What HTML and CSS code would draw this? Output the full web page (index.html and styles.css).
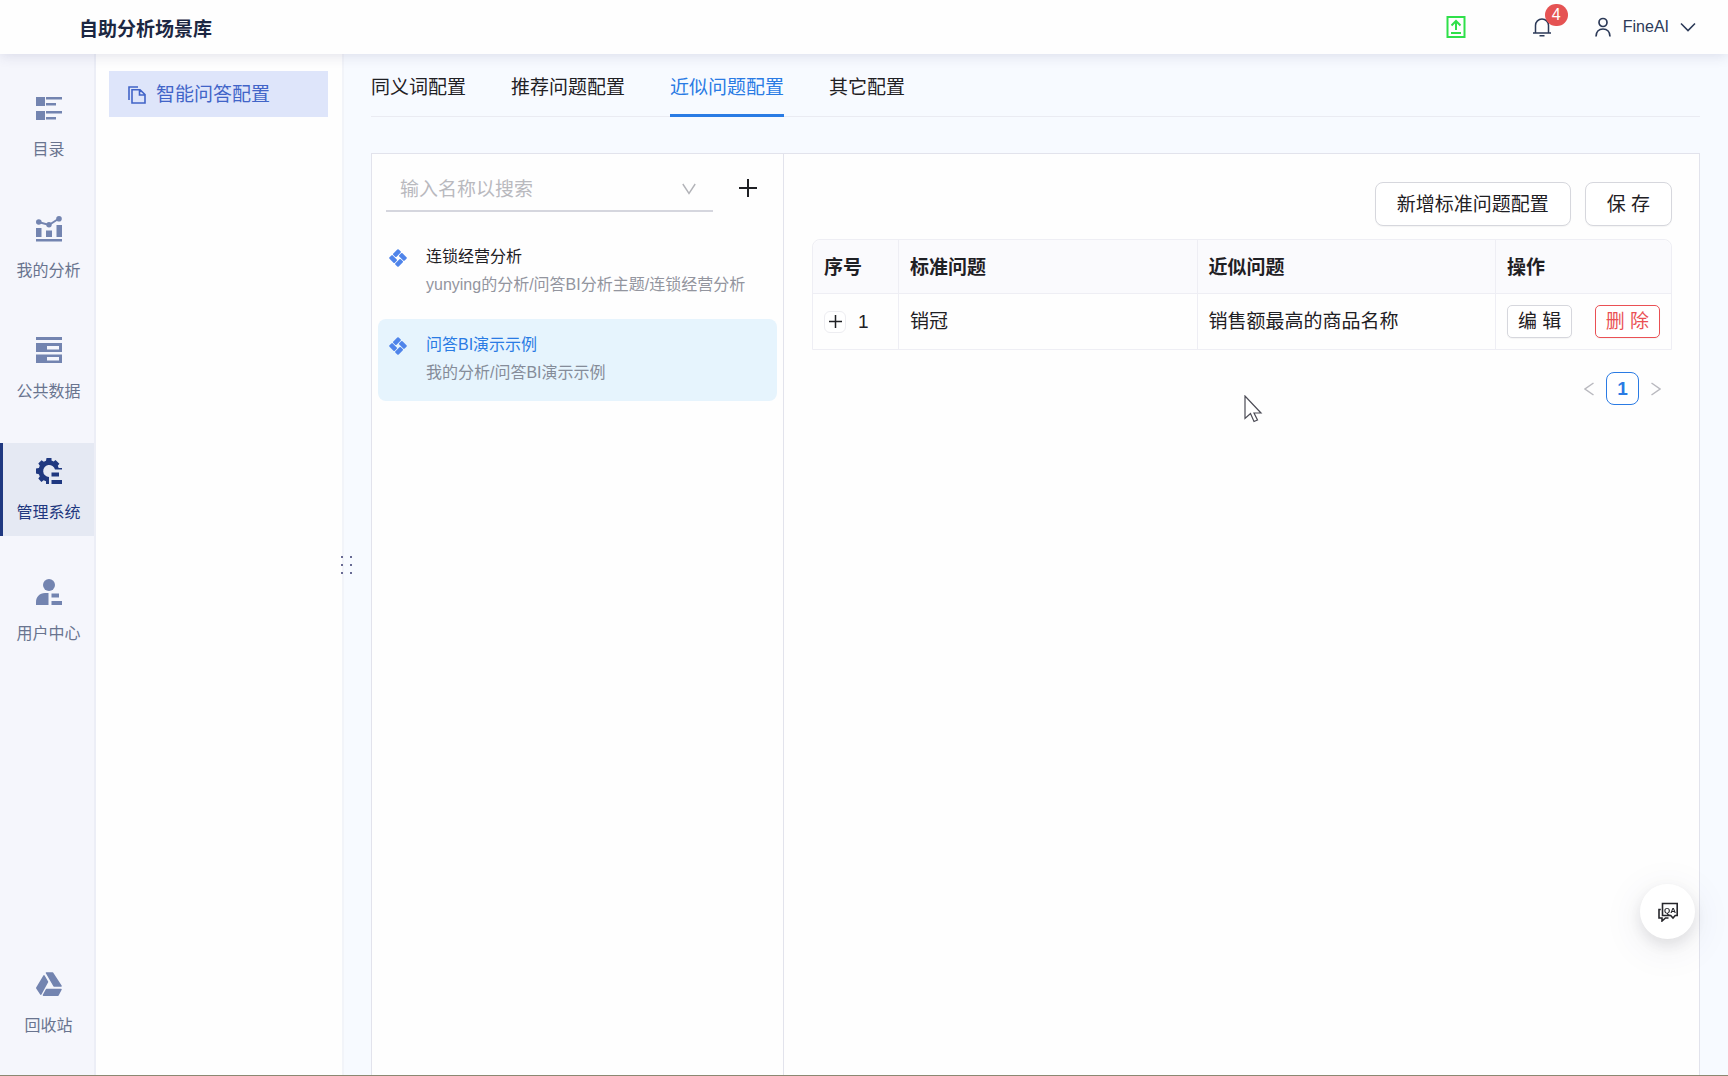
FILE: index.html
```html
<!DOCTYPE html>
<html lang="zh-CN">
<head>
<meta charset="utf-8">
<title>自助分析场景库</title>
<meta name="viewport" content="width=device-width, initial-scale=1">
<link rel="stylesheet" href="styles.css">
</head>
<body>
<svg class="sprite" aria-hidden="true">
  <symbol id="cube" viewBox="0 0 18 18">
    <g transform="rotate(45 9 9)" fill="currentColor">
      <rect x="2.500" y="2.500" width="4.600" height="7.600" rx="1"/>
      <rect x="7.900" y="2.500" width="7.600" height="4.600" rx="1"/>
      <rect x="10.900" y="7.900" width="4.600" height="7.600" rx="1"/>
      <rect x="2.500" y="10.900" width="7.600" height="4.600" rx="1"/>
    </g>
  </symbol>
</svg>

<header class="topbar">
  <h1 class="brand">自助分析场景库</h1>
  <div class="tools">
    <button class="icon-btn upload" aria-label="上传">
      <svg width="20" height="24" viewBox="0 0 20 24" fill="none" stroke="currentColor" stroke-width="2"><path d="M1.500 2h17v20h-17zM5 18h10M10 15V6.500M5.500 10.500L10 6l4.500 4.500"/></svg>
    </button>
    <button class="icon-btn bell" aria-label="通知">
      <svg width="20" height="20" viewBox="0 0 20 20" fill="none" stroke="currentColor" stroke-width="1.500"><path d="M1 16h18M3.500 16V8.500a6.500 6.500 0 0 1 13 0V16M7.500 18.800h5"/></svg>
      <span class="badge">4</span>
    </button>
    <button class="icon-btn account">
      <svg width="18" height="20" viewBox="0 0 18 20" fill="none" stroke="currentColor" stroke-width="1.700"><circle cx="9" cy="5.500" r="4"/><path d="M2 19.500c0-4.500 2.800-7.500 7-7.500s7 3 7 7.500"/></svg>
      <span>FineAI</span>
      <svg width="16" height="10" viewBox="0 0 16 10" fill="none" stroke="currentColor" stroke-width="1.600"><path d="M1 1.500l7 7 7-7"/></svg>
    </button>
  </div>
</header>

<div class="shell">
  <nav class="rail" aria-label="主导航">
    <a class="rail-item" href="#">
      <svg width="26" height="26" viewBox="0 0 26 26" fill="currentColor"><path d="M0 2h9v9H0zM10 2h16v2.500H10zM10 8h10v2.500H10zM0 16h9v9H0zM10 16h16v2.500H10zM10 22h10v2.500H10z"/></svg>
      <span>目录</span>
    </a>
    <a class="rail-item" href="#">
      <svg width="26" height="26" viewBox="0 0 26 26" fill="currentColor"><path d="M0 12h5.500v9H0zM10 14.500h6V21h-6zM20.500 9H26v12h-5.500zM0 23h26v2.500H0z"/><path d="M2.500 6l10.500 3L23 2.500" fill="none" stroke="currentColor" stroke-width="2"/><circle cx="2.800" cy="6" r="2.800"/><circle cx="13" cy="8.700" r="2.700"/><circle cx="23" cy="2.800" r="2.800"/></svg>
      <span>我的分析</span>
    </a>
    <a class="rail-item" href="#">
      <svg width="26" height="26" viewBox="0 0 26 26" fill="currentColor" fill-rule="evenodd"><path d="M0 0h26v3H0zM0 6h26v9H0zM11 9v3.500h12V9zM0 17.500h26v8.500H0zM11 20v3.500h12V20z"/></svg>
      <span>公共数据</span>
    </a>
    <a class="rail-item is-active" href="#" aria-current="page">
      <svg width="26" height="26" viewBox="0 0 26 26" fill="currentColor"><path d="M10.500 0h5v2.600l2.200.9 1.800-1.600 3.900 3.800-1.600 2 .9 2.200H26V11.500H19A6 6 0 1 0 13 19v7h-3v-2.800l-2.400-1-2.200 1.700-3.100-3.300 1.500-2.100-.9-2.300L0 15.500v-5l2.900-.6.9-2.200-1.500-2.300 3.200-3.200 2.300 1.500 2.200-.9zM15.500 14.500h7.500v4h-7.500zM15.500 22H26v4H15.500z"/></svg>
      <span>管理系统</span>
    </a>
    <a class="rail-item" href="#">
      <svg width="26" height="26" viewBox="0 0 26 26" fill="currentColor"><circle cx="13" cy="6" r="6"/><path d="M12.500 14v12H0v-3c0-5 3.500-9 9-9zM15.500 14.500h7.500v4h-7.500zM15.500 22H26v4H15.500z"/></svg>
      <span>用户中心</span>
    </a>
    <a class="rail-item rail-last" href="#">
      <svg width="26" height="26" viewBox="0 0 26 26" fill="currentColor" stroke="currentColor" stroke-linejoin="round" stroke-width="1.500"><path d="M10.500 2h6L25 15h-7zM8 4.800l3.500 6L4.800 23.200.8 17zM10.500 18.500h14.500L22 24.200H7.500z"/></svg>
      <span>回收站</span>
    </a>
  </nav>

  <aside class="submenu">
    <a class="submenu-item" href="#" aria-current="page">
      <svg width="18" height="18" viewBox="0 0 18 18" fill="none" stroke="currentColor" stroke-width="1.600"><path d="M1 14V1h9M4 3.800h8L17 8.500V17H4zM11.500 4v5H17"/></svg>
      <span>智能问答配置</span>
    </a>
    <div class="grip" aria-hidden="true"><i></i><i></i><i></i><i></i><i></i><i></i></div>
  </aside>

  <main class="content">
    <nav class="tabs" aria-label="配置">
      <a class="tab" href="#">同义词配置</a>
      <a class="tab" href="#">推荐问题配置</a>
      <a class="tab is-active" href="#" aria-current="page">近似问题配置</a>
      <a class="tab" href="#">其它配置</a>
    </nav>

    <section class="panel">
      <div class="themes">
        <div class="search-row">
          <label class="search">
            <input type="text" placeholder="输入名称以搜索" aria-label="输入名称以搜索">
            <svg width="14" height="12" viewBox="0 0 14 12" fill="none" stroke="currentColor" stroke-width="1.400"><path d="M.8 1L7 10.500 13.200 1"/></svg>
          </label>
          <button class="icon-btn add" aria-label="新增">
            <svg width="18" height="18" viewBox="0 0 18 18" stroke="currentColor" stroke-width="2"><path d="M9 0v18M0 9h18"/></svg>
          </button>
        </div>
        <a class="theme" href="#">
          <svg class="cube" width="18" height="18"><use href="#cube"/></svg>
          <span class="theme-text"><span class="theme-name">连锁经营分析</span><span class="theme-path">yunying的分析/问答BI分析主题/连锁经营分析</span></span>
        </a>
        <a class="theme is-active" href="#">
          <svg class="cube" width="18" height="18"><use href="#cube"/></svg>
          <span class="theme-text"><span class="theme-name">问答BI演示示例</span><span class="theme-path">我的分析/问答BI演示示例</span></span>
        </a>
      </div>

      <div class="questions">
        <div class="actions">
          <button class="btn">新增标准问题配置</button>
          <button class="btn">保 存</button>
        </div>
        <table class="grid">
          <colgroup><col class="col-no"><col><col><col class="col-ops"></colgroup>
          <thead><tr><th>序号</th><th>标准问题</th><th>近似问题</th><th>操作</th></tr></thead>
          <tbody><tr>
            <td><div class="no"><button class="expand" aria-label="展开"><svg width="13" height="13" viewBox="0 0 13 13" stroke="currentColor" stroke-width="1.500"><path d="M6.500 0v13M0 6.500h13"/></svg></button><span>1</span></div></td>
            <td>销冠</td>
            <td>销售额最高的商品名称</td>
            <td><div class="ops"><button class="btn btn-sm">编 辑</button><button class="btn btn-sm btn-danger">删 除</button></div></td>
          </tr></tbody>
        </table>
        <div class="pager">
          <button class="icon-btn arrow" aria-label="上一页"><svg width="10" height="14" viewBox="0 0 10 14" fill="none" stroke="currentColor" stroke-width="1.500"><path d="M9.500 1L1 7l8.500 6"/></svg></button>
          <button class="page" aria-current="page">1</button>
          <button class="icon-btn arrow" aria-label="下一页"><svg width="10" height="14" viewBox="0 0 10 14" fill="none" stroke="currentColor" stroke-width="1.500"><path d="M.5 1L9 7 .5 13"/></svg></button>
        </div>
      </div>
    </section>
  </main>
</div>

<button class="fab" aria-label="问答">
  <svg width="20" height="20" viewBox="0 0 20 20" fill="none" stroke="currentColor" stroke-width="1.600"><path d="M4.500 1.500h14.700v12h-2L15 16l-2.300-2.500H4.500zM2.800 7.500H1V16h3v3l3.500-3h3"/><text class="fab-text" x="12" y="10.500">QA</text></svg>
</button>
<svg class="cursor" width="20" height="28" viewBox="0 0 20 28" aria-hidden="true"><path d="M1 1v22.500l5.500-5 3.500 8 3.500-1.500-3.500-7H17z" fill="#fff" stroke="#4b4b55" stroke-width="1.200"/></svg>
</body>
</html>
```

FILE: styles.css
```css
* { box-sizing: border-box; }

body {
  margin: 0;
  min-height: 100vh;
  display: flex;
  flex-direction: column;
  background: #f7faff;
  border-bottom: 1px solid #8b8872;
  color: #1f2024;
  font: 19px/28px "Liberation Sans", "Noto Sans CJK SC", sans-serif;
}

a { color: inherit; text-decoration: none; }
button, input { font: inherit; color: inherit; }
svg { display: block; flex: none; }
.sprite { position: absolute; width: 0; height: 0; }

.icon-btn {
  display: flex;
  align-items: center;
  padding: 0;
  border: 0;
  background: none;
}

/* Top bar */
.topbar {
  position: relative;
  z-index: 2;
  display: flex;
  align-items: center;
  justify-content: space-between;
  height: 54px;
  padding: 0 32px 0 79px;
  background: #fefefe;
  box-shadow: 0 2px 12px rgba(60, 60, 110, .14);
}
.brand { margin: 0; padding-top: 5px; font-size: 19px; line-height: 28px; font-weight: 700; color: #1c2742; }
.tools { display: flex; align-items: center; color: #2c3a58; }
.upload { color: #2fe04a; }
.bell { position: relative; margin: 0 42px 0 66px; }
.badge {
  position: absolute;
  left: 13px;
  top: -13px;
  width: 23px;
  height: 22px;
  border-radius: 11px;
  background: #e55353;
  color: #fff;
  font-size: 16px;
  line-height: 22px;
  text-align: center;
}
.account { gap: 11px; font-size: 16px; }

/* Frame */
.shell { flex: 1; display: flex; align-items: stretch; }

.rail {
  display: flex;
  flex-direction: column;
  gap: 28px;
  width: 96px;
  padding: 26px 0;
  background: #f5f6fc;
  border-right: 2px solid #eceef6;
}
.rail-item {
  display: flex;
  flex-direction: column;
  align-items: center;
  gap: 17px;
  height: 93px;
  padding-top: 15px;
  border-left: 3px solid transparent;
  color: #7384b0;
  font-size: 16px;
}
.rail-item span { line-height: 24px; white-space: nowrap; color: #69748f; }
.rail-item.is-active { background: #e5e9f3; border-left-color: #1f3880; color: #1f3880; }
.rail-item.is-active span { color: #1f3880; }
.rail-last { margin-top: auto; }

.submenu {
  position: relative;
  width: 248px;
  padding: 17px 14px 0 13px;
  background: #fefefe;
  border-right: 2px solid #f2f4f9;
}
.submenu-item {
  display: flex;
  align-items: center;
  gap: 10px;
  height: 46px;
  padding: 1px 0 0 19px;
  background: #dee5fa;
  color: #4164c8;
}
.grip {
  position: absolute;
  right: -10px;
  top: 50%;
  transform: translateY(-50%);
  display: grid;
  grid-template-columns: 2px 2px;
  gap: 6px 7px;
}
.grip i { width: 2px; height: 2px; background: #686a94; }

.content {
  flex: 1;
  min-width: 0;
  display: flex;
  flex-direction: column;
  padding: 0 28px 0 27px;
}

/* Tabs */
.tabs {
  display: flex;
  gap: 45px;
  height: 63px;
  margin-bottom: 36px;
  padding-top: 20px;
  box-shadow: inset 0 -1px #eaebf2;
}
.tab { border-bottom: 3px solid transparent; white-space: nowrap; }
.tab.is-active { color: #2a7be4; border-bottom-color: #2a7be4; }

/* Panel */
.panel {
  flex: 1;
  display: flex;
  background: #fefefe;
  border: 1px solid #e2e3ec;
  border-bottom: 0;
}
.themes { width: 412px; padding: 10px 6px; border-right: 1px solid #e2e3ec; }
.search-row { display: flex; align-items: center; gap: 26px; margin: 0 20px 19px 8px; }
.search {
  flex: 1;
  display: flex;
  align-items: center;
  height: 48px;
  padding: 3px 17px 0 14px;
  border-bottom: 2px solid #d5d6de;
  color: #b2b3b8;
}
.search input { flex: 1; min-width: 0; padding: 3px 0 0; border: 0; outline: 0; background: none; }
.search input::placeholder { color: #b9b9be; opacity: 1; }

.theme {
  display: flex;
  gap: 19px;
  height: 82px;
  margin-bottom: 6px;
  padding: 12px 0 0 11px;
  border-radius: 8px;
  font-size: 16px;
}
.cube { margin-top: 6px; color: #4f84ea; }
.theme-text { display: flex; flex-direction: column; white-space: nowrap; }
.theme-path { color: #93959e; }
.theme.is-active { background: #e6f4fd; }
.theme.is-active .theme-name { color: #2a7be4; }
.theme.is-active .theme-path { color: #858c99; }

.questions { flex: 1; min-width: 0; padding: 28px 27px 0 28px; }
.actions { display: flex; justify-content: flex-end; gap: 14px; margin-bottom: 13px; }
.btn {
  height: 44px;
  padding: 2px 21px 0;
  border: 1px solid #d6d7dd;
  border-radius: 8px;
  background: #fff;
  box-shadow: 0 1px 1px rgba(0, 0, 0, .04);
  white-space: nowrap;
}
.btn-sm { height: 33px; padding: 0 10px; border-radius: 5px; line-height: 28px; }
.btn-danger { border-color: #ea5054; color: #ea5054; }

.grid {
  width: 100%;
  table-layout: fixed;
  border-collapse: separate;
  border-spacing: 0;
  border: 1px solid #eeeef4;
  border-radius: 8px 8px 0 0;
}
.grid th, .grid td { padding: 0 11px; border-left: 1px solid #eeeef4; text-align: left; }
.grid th:first-child, .grid td:first-child { border-left: 0; }
.grid th { height: 54px; padding-top: 2px; background: #fafafd; border-bottom: 1px solid #eeeef4; font-weight: 700; }
.grid th:first-child { border-radius: 8px 0 0 0; }
.grid th:last-child { border-radius: 0 8px 0 0; }
.grid td { height: 55px; }
.col-no { width: 85px; }
.col-ops { width: 176px; }
.no { display: flex; align-items: center; gap: 12px; }
.expand {
  display: grid;
  place-items: center;
  width: 22px;
  height: 22px;
  padding: 0;
  border: 1px solid #ededf1;
  border-radius: 6px;
  background: #fff;
}
.ops { display: flex; justify-content: space-between; }

.pager { display: flex; justify-content: flex-end; align-items: center; gap: 12px; margin-top: 22px; padding-right: 11px; }
.arrow { color: #b9b9bf; }
.page {
  width: 33px;
  height: 33px;
  padding: 0;
  border: 1px solid #2a7be4;
  border-radius: 8px;
  background: #fff;
  color: #2a7be4;
  font-weight: 700;
}

/* Floating assistant */
.fab {
  position: fixed;
  right: 33px;
  bottom: 137px;
  z-index: 3;
  display: grid;
  place-items: center;
  width: 55px;
  height: 55px;
  padding: 0;
  border: 0;
  border-radius: 50%;
  background: #fff;
  color: #26262b;
  box-shadow: 0 6px 16px rgba(0, 0, 0, .1), 0 8px 36px 8px rgba(60, 60, 110, .05);
}
.fab-text { font-size: 8px; font-weight: 700; text-anchor: middle; fill: currentColor; stroke: none; }

.cursor { position: fixed; left: 1244px; top: 395px; z-index: 4; }
```
